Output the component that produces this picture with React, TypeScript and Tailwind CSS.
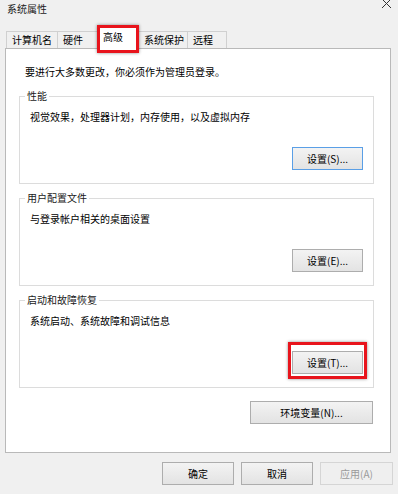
import React from 'react';

const FONT = "font-['Noto_Sans_CJK_SC','Microsoft_YaHei',sans-serif]";

const tabs = [
  { label: '计算机名', w: 'w-[52px]' },
  { label: '硬件', w: 'w-[41px]' },
  { label: '高级', w: 'w-[42px]', active: true },
  { label: '系统保护', w: 'w-[50px]' },
  { label: '远程', w: 'w-[40px]' },
];

type BtnProps = {
  children: React.ReactNode;
  className?: string;
  focused?: boolean;
  disabled?: boolean;
};

const WinButton: React.FC<BtnProps> = ({ children, className = '', focused, disabled }) => {
  let look = 'border-[#adadad] bg-linear-to-b from-[#f3f3f3] to-[#e3e3e3] text-black';
  if (focused) look = 'border-[#5a9fe6] bg-linear-to-b from-[#f3f3f3] to-[#e3e3e3] text-black';
  if (disabled) look = 'border-[#d5d5d5] bg-[#efefef] text-[#9a9a9a]';
  return (
    <div
      className={`flex h-[23px] items-center justify-center border text-[10px] leading-[16px] ${look} ${className}`}
    >
      {children}
    </div>
  );
};

/** Red highlight frame drawn over the element it wraps */
const Highlight: React.FC<{ className: string }> = ({ className }) => (
  <span
    className={`pointer-events-none absolute z-20 border-[3px] border-[#e8141c] shadow-[0_0_3px_rgba(0,0,0,0.45)] ${className}`}
  />
);

type GroupProps = {
  title: string;
  desc: string;
  button: string;
  focused?: boolean;
  highlight?: boolean;
  className?: string;
};

const Group: React.FC<GroupProps> = ({ title, desc, button, focused, highlight, className = '' }) => (
  <fieldset className={`border border-[#dcdcdc] ${className}`}>
    <legend className="ml-[5px] px-[2px] text-[10px] leading-[16px] text-[#1a1a1a]">{title}</legend>
    <div className="pl-[10px] pt-[5px] text-[10px] leading-[16px]">{desc}</div>
    <div className="flex justify-end pr-[10px] pt-[22px] pb-[13px]">
      <div className="relative">
        <WinButton focused={focused} className="w-[71px]">
          {button}
        </WinButton>
        {highlight && <Highlight className="left-[-4px] right-[-4px] top-[-9px] bottom-[-5px]" />}
      </div>
    </div>
  </fieldset>
);

const App: React.FC = () => {
  return (
    <div className={`flex h-[494px] w-[398px] flex-col overflow-hidden bg-[#f0f0f0] text-black ${FONT}`}>
      {/* title bar */}
      <div className="flex h-[27px] items-start justify-between">
        <div className="pl-[7px] pt-[1px] text-[10px] leading-[16px] text-[#1a1a1a]">系统属性</div>
        <svg width="11" height="11" viewBox="0 0 11 11" className="mr-[6px] mt-[-2px]">
          <path d="M1 1 L10 10 M10 1 L1 10" stroke="#333" strokeWidth="1" fill="none" />
        </svg>
      </div>

      {/* tabs */}
      <div className="ml-[6px] flex h-[21px] items-end">
        {tabs.map((t, i) =>
          t.active ? (
            <div
              key={t.label}
              className={`relative z-10 -mb-px -ml-px h-[22px] border-x border-t border-[#d0d0d0] bg-white pl-[5px] pt-[1px] text-[10px] leading-[16px] ${t.w}`}
            >
              {t.label}
              <Highlight className="left-[-1px] right-[-1px] top-[-3px] bottom-[-4px]" />
            </div>
          ) : (
            <div
              key={t.label}
              className={`h-[17px] border-x border-t border-[#d0d0d0] bg-[#f0f0f0] pl-[5px] text-[10px] leading-[16px] ${i > 0 ? '-ml-px' : ''} ${t.w}`}
            >
              {t.label}
            </div>
          ),
        )}
      </div>

      {/* tab page */}
      <div className="ml-[5px] flex h-[405px] w-[386px] flex-col border border-[#b9b9b9] bg-white pl-[13px] pr-[16px] pt-[15px]">
        <div className="pl-[6px] text-[10px] leading-[16px]">要进行大多数更改，你必须作为管理员登录。</div>
        <Group
          className="mt-[8px]"
          title="性能"
          desc="视觉效果，处理器计划，内存使用，以及虚拟内存"
          button="设置(S)..."
          focused
        />
        <Group className="mt-[6px]" title="用户配置文件" desc="与登录帐户相关的桌面设置" button="设置(E)..." />
        <Group
          className="mt-[6px]"
          title="启动和故障恢复"
          desc="系统启动、系统故障和调试信息"
          button="设置(T)..."
          highlight
        />
        <div className="mt-[13px] flex justify-end pr-[1px]">
          <WinButton className="w-[123px]">环境变量(N)...</WinButton>
        </div>
      </div>

      {/* dialog buttons */}
      <div className="mt-[9px] flex justify-end gap-[7px] pr-[5px]">
        <WinButton className="w-[72px]">确定</WinButton>
        <WinButton className="w-[72px]">取消</WinButton>
        <WinButton className="w-[73px]" disabled>
          应用(A)
        </WinButton>
      </div>
    </div>
  );
};

export default App;
